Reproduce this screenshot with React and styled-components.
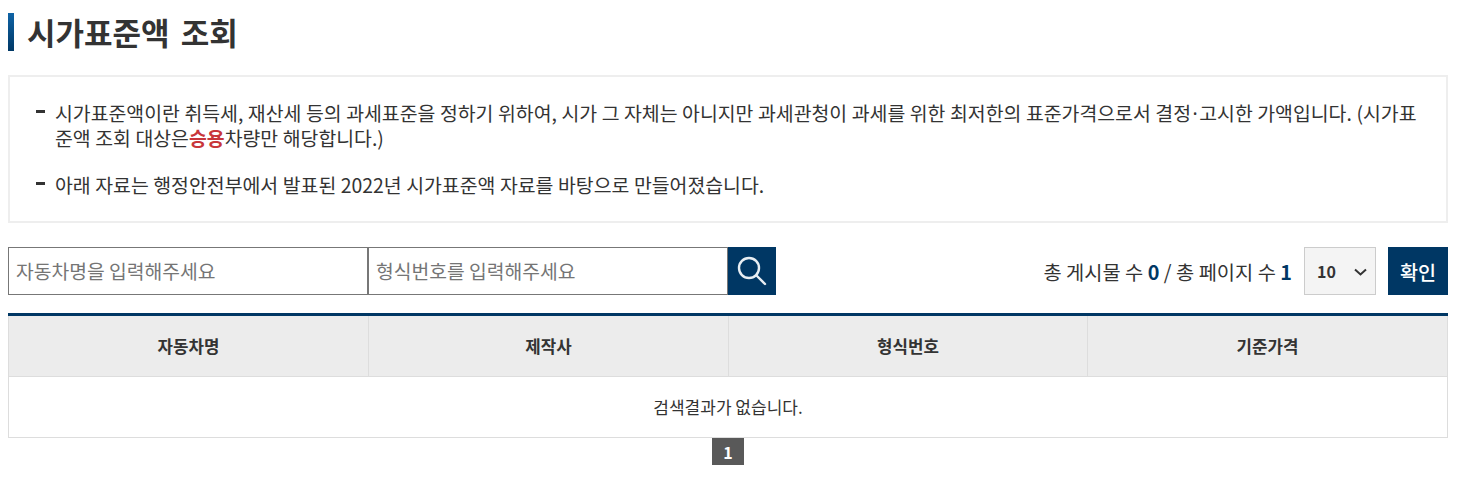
import React from "react";
import styled, { createGlobalStyle } from "styled-components";

const navy = "#003764";

const GlobalStyle = createGlobalStyle`
  html, body {
    margin: 0;
    padding: 0;
    background: #fff;
  }
  body {
    font-family: "Noto Sans CJK KR", "Noto Sans", sans-serif;
    color: #333;
  }
  * {
    box-sizing: border-box;
  }
`;

const Page = styled.div`
  width: 1459px;
  height: 480px;
  padding: 13px 11px 0 8px;
  overflow: hidden;
`;

const Title = styled.h1`
  height: 38px;
  margin: 0;
  padding-left: 13px;
  display: flex;
  align-items: center;
  border-left: 6px solid ${navy};
  border-image: linear-gradient(#0f65a8, #003764) 1;
  font-size: 31px;
  font-weight: 700;
  line-height: 38px;
  word-spacing: 4px;
  color: #333;
`;

const InfoBox = styled.div`
  margin-top: 24px;
  height: 148px;
  padding: 24px 25px 0 26px;
  border: 2px solid #eee;
`;

const InfoItem = styled.p`
  position: relative;
  margin: 0 0 23px;
  padding-left: 19px;
  font-size: 19.4px;
  line-height: 24px;
  word-spacing: 0.2px;
  color: #333;

  &::before {
    content: "";
    position: absolute;
    left: 0;
    top: 9px;
    width: 9px;
    height: 3px;
    background: #333;
  }
`;

const MiddleDot = styled.span`
  padding: 0 1.5px;
  font-family: "Noto Sans", sans-serif;
`;

const Accent = styled.strong`
  color: #c8363a;
  font-weight: 700;
`;

const Toolbar = styled.div`
  margin-top: 24px;
  height: 48px;
  display: flex;
  align-items: stretch;
`;

const SearchInput = styled.input`
  width: 360px;
  height: 48px;
  padding: 0 7px 1px;
  border: 1px solid #777;
  outline: none;
  font-family: inherit;
  font-size: 19.3px;
  color: #333;

  &::placeholder {
    color: #757575;
    opacity: 1;
  }
`;

const SearchButton = styled.button`
  width: 48px;
  height: 48px;
  padding: 0;
  border: none;
  background: ${navy};
  display: flex;
  align-items: center;
  justify-content: center;
`;

const Summary = styled.div`
  margin-left: auto;
  display: flex;
  align-items: center;
  font-size: 19.8px;
  color: #333;
  white-space: pre;
`;

const Count = styled.strong`
  color: ${navy};
  font-weight: 700;
`;

const PageSize = styled.div`
  position: relative;
  width: 72px;
  margin-left: 12px;
  padding-left: 12px;
  border: 1px solid #ccc;
  background: #f4f4f4;
  display: flex;
  align-items: center;
  font-size: 16px;
  font-weight: 700;
  color: #333;
`;

const Chevron = styled.svg`
  position: absolute;
  right: 8px;
  top: 20px;
`;

const ConfirmButton = styled.button`
  width: 60px;
  margin-left: 12px;
  padding: 0;
  border: none;
  background: ${navy};
  color: #fff;
  font-family: inherit;
  font-size: 19.6px;
  font-weight: 500;
`;

const Table = styled.div`
  margin-top: 18px;
  border-top: 3px solid ${navy};
`;

const HeaderRow = styled.div`
  display: grid;
  grid-template-columns: 359px 360px 359px 360px;
  height: 61px;
  background: #ececec;
  border: 1px solid #ddd;
  border-top: none;
`;

const HeaderCell = styled.div`
  display: flex;
  align-items: center;
  justify-content: center;
  font-size: 16.8px;
  font-weight: 700;
  color: #333;
  border-left: ${({ $first }) => ($first ? "none" : "1px solid #ddd")};
`;

const EmptyRow = styled.div`
  height: 61px;
  padding-bottom: 2px;
  display: flex;
  align-items: center;
  justify-content: center;
  border: 1px solid #ddd;
  border-top: none;
  font-size: 17px;
  color: #333;
`;

const Pagination = styled.div`
  display: flex;
  justify-content: center;
`;

const PageNumber = styled.span`
  width: 32px;
  height: 27px;
  background: #595959;
  color: #fff;
  display: flex;
  align-items: center;
  justify-content: center;
  font-size: 16px;
  font-weight: 700;
`;

const columns = ["자동차명", "제작사", "형식번호", "기준가격"];

export default function App() {
  return (
    <Page>
      <GlobalStyle />
      <Title>시가표준액 조회</Title>
      <InfoBox>
        <InfoItem>
          시가표준액이란 취득세, 재산세 등의 과세표준을 정하기 위하여, 시가 그 자체는 아니지만 과세관청이
          과세를 위한 최저한의 표준가격으로서 결정<MiddleDot>·</MiddleDot>고시한 가액입니다. (시가표준액 조회 대상은
          <Accent>승용</Accent>차량만 해당합니다.)
        </InfoItem>
        <InfoItem>아래 자료는 행정안전부에서 발표된 2022년 시가표준액 자료를 바탕으로 만들어졌습니다.</InfoItem>
      </InfoBox>
      <Toolbar>
        <SearchInput placeholder="자동차명을 입력해주세요" />
        <SearchInput placeholder="형식번호를 입력해주세요" />
        <SearchButton aria-label="검색">
          <svg width="32" height="32" viewBox="0 0 32 32" fill="none" stroke="#e8eef3" strokeWidth="2.4" strokeLinecap="round">
            <circle cx="13" cy="13" r="10" />
            <path d="M20.5 20.5L29 29" />
          </svg>
        </SearchButton>
        <Summary>
          총 게시물 수 <Count>0</Count> / 총 페이지 수 <Count>1</Count>
        </Summary>
        <PageSize>
          10
          <Chevron width="13" height="8" viewBox="0 0 13 8" fill="none" stroke="#333" strokeWidth="2">
            <path d="M1 1.5L6.5 6.5L12 1.5" />
          </Chevron>
        </PageSize>
        <ConfirmButton>확인</ConfirmButton>
      </Toolbar>
      <Table>
        <HeaderRow>
          {columns.map((name, i) => (
            <HeaderCell key={name} $first={i === 0}>
              {name}
            </HeaderCell>
          ))}
        </HeaderRow>
        <EmptyRow>검색결과가 없습니다.</EmptyRow>
      </Table>
      <Pagination>
        <PageNumber>1</PageNumber>
      </Pagination>
    </Page>
  );
}
